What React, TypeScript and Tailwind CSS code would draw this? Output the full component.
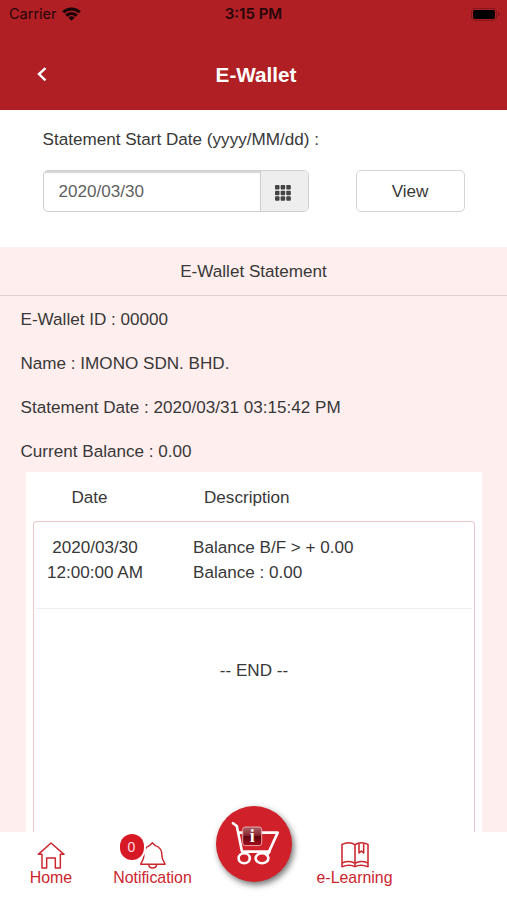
import type { ReactNode } from "react";

interface Entry {
  date: string;
  time: string;
  description: string;
  balance: string;
}

const details = [
  "E-Wallet ID : 00000",
  "Name : IMONO SDN. BHD.",
  "Statement Date : 2020/03/31 03:15:42 PM",
  "Current Balance : 0.00",
];

const entries: Entry[] = [
  {
    date: "2020/03/30",
    time: "12:00:00 AM",
    description: "Balance B/F > + 0.00",
    balance: "Balance : 0.00",
  },
];

function StatusBar() {
  return (
    <div className="grid h-[28px] grid-cols-3 items-center pl-[9px] pr-[7px] font-['Inter',sans-serif] text-[14.5px] text-[#26060a]">
      <div className="flex items-center gap-[5px]">
        <span>Carrier</span>
        <svg width="19" height="14" viewBox="0 0 19 14" fill="none" stroke="#180305" strokeWidth="3">
          <path d="M1.2 5.3a11.8 11.8 0 0 1 16.6 0" />
          <path d="M4.2 8.6a7.5 7.5 0 0 1 10.6 0" />
          <path d="M9.5 13.7 6.4 10.6a4.4 4.4 0 0 1 6.2 0Z" fill="#180305" stroke="none" />
        </svg>
      </div>
      <span className="pr-[2px] text-center text-[15px] font-semibold">3:15 PM</span>
      <div className="flex items-center justify-end gap-px">
        <div className="rounded-[4px] border border-[#85161b] p-px">
          <div className="h-[9px] w-[22px] rounded-[2px] bg-black" />
        </div>
        <div className="h-1 w-[2px] rounded-r-full bg-[#85161b]" />
      </div>
    </div>
  );
}

function HomeIcon() {
  return (
    <svg width="28" height="28" viewBox="0 0 84 84" fill="none" stroke="#cb252d" strokeWidth="4.4" strokeLinejoin="round" strokeLinecap="round">
      <path d="M15 40H4L42 6l39 34H70v41H55V51H29v30H15Z" />
    </svg>
  );
}

function BellIcon() {
  return (
    <svg width="28" height="28" viewBox="0 0 84 84" fill="none" stroke="#cb252d" strokeWidth="4.4" strokeLinejoin="round" strokeLinecap="round">
      <path d="M5 70c1-6 9-12 9-22 0-19 5-30 17-34l9-9 9 9c14 4 20 14 20 31 0 13 8 18 9 25Z" />
      <path d="M29 71c2 13 22 13 24 0" />
    </svg>
  );
}

function BookIcon() {
  return (
    <svg width="28" height="28" viewBox="0 0 84 84" fill="none" stroke="#cb252d" strokeWidth="4.6" strokeLinejoin="round">
      <path d="M42 11C31 4 16 4 3 10v67c13-5 28-6 39 0 11-6 26-5 39 0V10C68 4 53 4 42 11Z" />
      <path d="M42 11v66M3 66c13-5 28-6 39 1 11-7 26-6 39-1" />
      <path d="M54 8v28l7-6 7 6V8" />
    </svg>
  );
}

function CartButton() {
  return (
    <button className="flex size-[76px] items-center justify-center rounded-full bg-[#d02029] shadow-[2px_3px_6px_rgba(0,0,0,0.55)]">
      <svg width="76" height="76" viewBox="0 0 76 76" fill="none">
        <defs>
          <linearGradient id="info" x1="0" y1="0" x2="0" y2="1">
            <stop offset="0" stopColor="#a86468" />
            <stop offset="0.45" stopColor="#8d2530" />
            <stop offset="0.5" stopColor="#5c0710" />
            <stop offset="1" stopColor="#a50d19" />
          </linearGradient>
        </defs>
        <g stroke="#fff" strokeWidth="2.6" strokeLinecap="round" strokeLinejoin="round">
          <path d="m17 17.2 3.8 2.8 5.2 25.6H53l8.7-19H23.5" />
          <ellipse cx="28.2" cy="52.3" rx="5.6" ry="5" />
          <ellipse cx="46" cy="52.3" rx="6.4" ry="5" />
          <path d="M53.5 45.8 51 49" />
        </g>
        <rect x="26.7" y="21" width="19" height="18.6" rx="2.5" fill="url(#info)" stroke="#e5a9ab" strokeWidth="1" />
        <text x="36.3" y="36" textAnchor="middle" fontSize="18" fontWeight="700" fill="#fff" fontFamily="Liberation Serif, serif">
          i
        </text>
      </svg>
    </button>
  );
}

function NavItem({ label, children }: { label: string; children: ReactNode }) {
  return (
    <a href="#" className="flex flex-col items-center text-[15.9px] leading-[18px] text-[#cb252d]">
      <span className="relative">{children}</span>
      <span className="whitespace-nowrap">{label}</span>
    </a>
  );
}

export default function App() {
  return (
    <div className="flex h-[900px] w-[507px] flex-col overflow-hidden bg-white font-['Liberation_Sans',Arial,sans-serif] text-[17.1px] leading-6 text-[#383838]">
      <header className="h-[110px] shrink-0 bg-[#b01f24]">
        <StatusBar />
        <div className="grid h-[94px] grid-cols-[84px_1fr_84px] items-center text-white">
          <button className="flex justify-center">
            <svg width="10" height="16" viewBox="0 0 10 16" fill="none" stroke="#fff" strokeWidth="2.4">
              <path d="M8.5 1.2 2 7l6.5 6.3" />
            </svg>
          </button>
          <h1 className="pl-[5px] text-center text-[20.7px] font-bold">E-Wallet</h1>
        </div>
      </header>

      <section className="h-[137px] shrink-0 px-[42.5px] pt-[18px]">
        <label className="block">Statement Start Date (yyyy/MM/dd) :</label>
        <div className="mt-[18px] flex justify-between">
          <div className="flex h-[42px] w-[266px] overflow-hidden rounded-[5px] border-[1.5px] border-[#cfcfcf]">
            <div className="flex flex-1 items-center pl-[15px] pt-px text-[#5f5f5f] shadow-[inset_0_2px_1px_#d4d4d4]">
              2020/03/30
            </div>
            <button className="flex w-[48px] items-center justify-center border-l border-[#cfcfcf] bg-[#eee] pr-[2px] pt-[4px]">
              <svg width="16" height="16" viewBox="0 0 17 17" fill="#444">
                {[0, 6, 12].map((y) =>
                  [0, 6, 12].map((x) => (
                    <rect key={`${x}-${y}`} x={x} y={y} width="4.8" height="4.8" rx="1" />
                  ))
                )}
              </svg>
            </button>
          </div>
          <button className="h-[42px] w-[109px] rounded-[5px] border-[1.5px] border-[#d4d4d4] bg-white pt-[2px]">
            View
          </button>
        </div>
      </section>

      <main className="flex min-h-0 flex-1 flex-col bg-[#feeeee]">
        <h2 className="flex h-[49px] shrink-0 items-center justify-center border-b-[1.5px] border-[#ddd0d0] pt-[2px]">
          E-Wallet Statement
        </h2>
        <div className="pl-[20.5px]">
          {details.map((line) => (
            <p key={line} className="flex h-11 items-center pt-[4px]">
              {line}
            </p>
          ))}
        </div>

        <div className="ml-[26px] mr-[25px] flex min-h-0 flex-1 flex-col bg-white px-[7px]">
          <div className="grid h-[49px] shrink-0 grid-cols-[113px_1fr] items-center pt-[2px] text-center">
            <span>Date</span>
            <span className="pl-[58px] text-left">Description</span>
          </div>
          <div className="flex-1 rounded-t-[4px] border-x-[1.5px] border-t-[1.5px] border-[#eac6ca]">
            {entries.map((entry) => (
              <div
                key={entry.date}
                className="mx-[2px] grid h-[87px] grid-cols-[118px_1fr] border-b border-[#eee] pt-[14px] leading-[24.5px]"
              >
                <div className="text-center">
                  <p>{entry.date}</p>
                  <p>{entry.time}</p>
                </div>
                <div className="pl-[39px]">
                  <p>{entry.description}</p>
                  <p>{entry.balance}</p>
                </div>
              </div>
            ))}
            <p className="pt-[50px] text-center">-- END --</p>
          </div>
        </div>
      </main>

      <nav className="grid h-[68px] shrink-0 grid-cols-[102px_101px_101px_101px_102px] bg-white pt-[9px]">
        <NavItem label="Home">
          <HomeIcon />
        </NavItem>
        <NavItem label="Notification">
          <BellIcon />
          <span className="absolute left-[-19px] top-[-7px] flex h-[26px] w-6 items-center justify-center rounded-full bg-[#d71925] text-[14px] text-[#ffdce0] ring-2 ring-white">
            0
          </span>
        </NavItem>
        <div className="relative flex justify-center">
          <div className="absolute top-[-35px]">
            <CartButton />
          </div>
        </div>
        <NavItem label="e-Learning">
          <BookIcon />
        </NavItem>
      </nav>
    </div>
  );
}
